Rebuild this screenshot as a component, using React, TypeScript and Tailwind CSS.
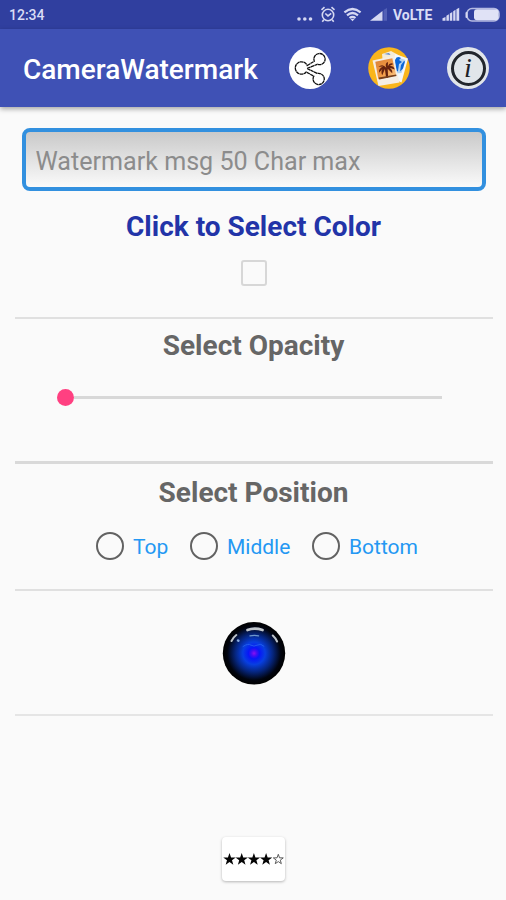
import React from "react";

function StatusIcons() {
  return (
    <svg className="h-[29px] w-[213px]" viewBox="293 0 213 29" fill="none">
      <g fill="#d5d8f2">
        <circle cx="299" cy="19" r="1.8" />
        <circle cx="304.8" cy="19" r="1.8" />
        <circle cx="310.5" cy="19" r="1.8" />
      </g>
      <g stroke="#d5d8f2" strokeWidth="1.6">
        <circle cx="328" cy="15" r="5.7" />
        <path d="M325.3 13.5l2.7 2.4 3.2-2.6M321.5 9.8l3-2.6M331.5 7.2l3 2.6M323.8 19.8l-1.5 2M332.2 19.8l1.5 2" />
      </g>
      <g stroke="#d5d8f2" strokeWidth="2.2">
        <path d="M344.4 12.4q8.1-6.8 16.2 0" />
        <path d="M347 15.3q5.5-4.6 11 0" />
        <path d="M349.5 18q3-2.4 6 0" />
      </g>
      <path d="M350.2 18.8h4.6l-2.3 2.5z" fill="#d5d8f2" />
      <path d="M370 20.8L382.5 11v9.8z" fill="#d5d8f2" />
      <path d="M383.5 20.8V10l3.5-2v12.8z" fill="#5360b6" />
      <path d="M442.5 20.8v-2.5l3-1.3v3.8zM446.4 20.8v-5l2.5-1.6v6.6zM449.8 20.8v-7.4l2.5-1.5v8.9zM453.2 20.8v-9.6l2.3-1.5v11.1zM456.4 20.8V9.3l2.8-1.6v13.1z" fill="#d5d8f2" />
      <rect x="467" y="8.5" width="32" height="12.5" rx="5" stroke="#b5bae2" strokeWidth="1.6" />
      <rect x="474" y="9.3" width="24.5" height="11" rx="3" fill="#e0e2f6" />
      <rect x="465.5" y="12" width="2" height="6" rx="1" fill="#d5d8f2" />
    </svg>
  );
}

function ShareIcon() {
  return (
    <svg className="size-[42px]" viewBox="0 0 42 42">
      <circle cx="21" cy="21" r="21" fill="#fff" />
      <g fill="none" stroke="#111" strokeWidth="1.3">
        <path d="M18.2 18.6L25.3 14.2A5.6 5.6 0 1 1 28.4 17.3L18 21.5L28.4 26.5A5.6 5.6 0 1 1 24.8 29.2L17.2 25A6.2 6.2 0 1 1 18.2 18.6Z" strokeDasharray="3.5 .35" />
      </g>
    </svg>
  );
}

function GalleryIcon() {
  return (
    <svg className="size-[42px]" viewBox="0 0 42 42">
      <defs>
        <linearGradient id="sunset" x1="0" y1="0" x2="1" y2="1">
          <stop offset="0" stopColor="#d98038" />
          <stop offset=".55" stopColor="#f29a45" />
          <stop offset="1" stopColor="#ffd39a" />
        </linearGradient>
      </defs>
      <circle cx="21" cy="21" r="20.8" fill="#f9b51c" />
      <path d="M14 7l9-3 11 6-6 22-12-5z" fill="#f4ecd8" />
      <path d="M16 7l5-1 1.5 2z" fill="#5b86cf" />
      <path d="M27 7l13 4.5-6.5 24-10-5z" fill="#f4f7fa" />
      <path d="M28.5 10l9 3-4 13-6 .5z" fill="#b4d4f3" />
      <path d="M27 13q2-5 6-2l-2 2 3 2-3 2-1 7-2 1zM33 18l3-4 1 .4-2 7-3 3z" fill="#0b67da" />
      <path d="M4.5 13.5L25.5 9l6 26.5L10.5 39z" fill="#f6eee4" />
      <path d="M7.3 14.8l17-3.5 4 17.3-18 3.6z" fill="url(#sunset)" />
      <g fill="#64220f">
        <path d="M18.3 20.8q-3.5-4.5-8-1l5-.2q-5 1.7-4.2 6.2l3.4-4q-2 3-.3 6.5l2.7-6.4 1.2 8.8h2l-.4-9 4.5 4.5q.6-3-2.5-5.4l5 1.6q-1-4-5.3-3.4l4-2q-3.7-2-5.6 2.3l.2-4.4q-3.5 1-1.7 5.9z" />
      </g>
      <path d="M10.8 30.6l17.3-3.2.4 1.7-17.3 3.5z" fill="#78401c" />
    </svg>
  );
}

function InfoIcon() {
  return (
    <span className="grid size-[42px] place-items-center rounded-full bg-[#e2e6ea]">
      <span className="grid size-[35px] place-items-center rounded-full border-[3px] border-[#22262c] bg-[#e1e6ea]">
        <span className="font-['Liberation_Serif',serif] text-[28px] leading-[28px] text-[#1c2026] italic">i</span>
      </span>
    </span>
  );
}

function Lens() {
  return (
    <svg className="size-[64px]" viewBox="0 0 64 64">
      <defs>
        <radialGradient id="lens" cx=".5" cy=".5" r=".5">
          <stop offset="0" stopColor="#8a12f0" />
          <stop offset=".09" stopColor="#430df4" />
          <stop offset=".18" stopColor="#0717f8" />
          <stop offset=".36" stopColor="#083fe0" />
          <stop offset=".6" stopColor="#06267f" />
          <stop offset=".86" stopColor="#01040e" />
          <stop offset="1" stopColor="#000" />
        </radialGradient>
        <filter id="soft"><feGaussianBlur stdDeviation=".5" /></filter>
      </defs>
      <circle cx="32" cy="32.3" r="31.2" fill="url(#lens)" />
      <g fill="none" strokeLinecap="round" filter="url(#soft)">
        <path d="M25.5 9q7-2.8 15 0" stroke="#c2c7cc" strokeWidth="2.7" />
        <path d="M28 14.8q4.5-1 8.5 0" stroke="#6e98cc" strokeWidth="1.3" />
        <path d="M9.5 20q2-4 4.8-6M50.8 14.5q3 2.8 4.3 6" stroke="#bcc3ca" strokeWidth="2" />
        <path d="M16 19.5l.4.2" stroke="#87a9df" strokeWidth="2.5" />
        <path d="M21 25.5q5-3.5 8-1.3 3 1.8 6 0 4-2.3 7 1" stroke="#2864ef" strokeWidth=".8" />
      </g>
    </svg>
  );
}

function Stars() {
  const star = "M0-6.5L1.55-2.1 6.2-2 2.5.8 3.8 5.2 0 2.6-3.8 5.2-2.5.8-6.2-2-1.55-2.1Z";
  return (
    <svg className="h-[16px] w-[62px]" viewBox="0 0 62 16">
      {[6.5, 18.7, 30.9, 43.1].map((x) => (
        <path key={x} d={star} transform={`translate(${x} 8.5)`} fill="#050505" />
      ))}
      <path d={star} transform="translate(55.3 8.5) scale(.8)" fill="#fff" stroke="#555" strokeWidth="1.2" />
    </svg>
  );
}

function Position({ label }: { label: string }) {
  return (
    <label className="flex shrink-0 items-center">
      <input type="radio" name="position" className="size-[28px] shrink-0 appearance-none rounded-full border-[2.4px] border-[#626262]" />
      <span className="mt-[2px] ml-[9px] text-[21px] leading-[28px] text-[#2498f3]">{label}</span>
    </label>
  );
}

export default function App() {
  return (
    <div className="flex h-[900px] w-[506px] flex-col overflow-hidden bg-[#fafafa] font-['Roboto',sans-serif]">
      <div className="flex h-[29px] shrink-0 items-center justify-between bg-[#303f9f] pl-[9px]">
        <span className="pt-px text-[14px] leading-[29px] font-medium text-[#d9dcf5]">12:34</span>
        <div className="grid">
          <div className="col-start-1 row-start-1"><StatusIcons /></div>
          <span className="col-start-1 row-start-1 pl-[100px] text-[14px] leading-[30px] font-bold text-[#d9dcf5]">VoLTE</span>
        </div>
      </div>
      <header className="flex h-[78px] shrink-0 items-center bg-[#3f51b5] pl-[23px] shadow-[0_2px_5px_rgba(0,0,0,0.35)]">
        <h1 className="w-[266px] pt-[3px] text-[28px] leading-[36px] font-medium whitespace-nowrap text-white">CameraWatermark</h1>
        <div className="flex gap-[37px]">
          <ShareIcon />
          <GalleryIcon />
          <InfoIcon />
        </div>
      </header>
      <main className="flex flex-col items-center pl-px">
        <input
          className="mt-[21px] h-[63px] w-[464px] rounded-[8px] border-4 border-[#3290df] bg-linear-to-b from-[#c6c6c6] to-[#fefefe] bg-origin-border px-[10px] pt-[3px] text-[25.1px] placeholder:text-[#8c8c8c]"
          placeholder="Watermark msg 50 Char max"
        />
        <h2 className="mt-[18px] text-[28px] leading-[36px] font-bold text-[#2234a8]">Click to Select Color</h2>
        <input type="checkbox" className="mt-[15px] size-[26px] appearance-none rounded-[3px] border-2 border-[#d7d7d7]" />
        <hr className="mt-[31px] h-[2px] w-[478px] border-0 bg-[#e0e0e0]" />
        <h2 className="mt-[9px] text-[28px] leading-[36px] font-bold text-[#666]">Select Opacity</h2>
        <div className="mt-[24px] mr-[8px] flex h-[18px] w-[385px] items-center">
          <span className="size-[17px] rounded-full bg-[#ff4081]" />
          <span className="h-[3px] flex-1 bg-[#d8d8d8]" />
        </div>
        <hr className="mt-[55px] h-[3px] w-[478px] border-0 bg-[#d9d9d9]" />
        <h2 className="mt-[11px] text-[28px] leading-[36px] font-bold text-[#666]">Select Position</h2>
        <div className="mt-[21px] ml-[7px] flex h-[28px] w-[322px] justify-between">
          <Position label="Top" />
          <Position label="Middle" />
          <Position label="Bottom" />
        </div>
        <hr className="mt-[29px] h-[2px] w-[478px] border-0 bg-[#e0e0e0]" />
        <button className="mt-[30px] flex"><Lens /></button>
        <hr className="mt-[29px] h-[2px] w-[478px] border-0 bg-[#e5e5e5]" />
        <button className="mt-[121px] flex h-[44px] w-[63px] items-center justify-center rounded-[4px] bg-white shadow-[0_1px_3px_rgba(0,0,0,0.28)]">
          <Stars />
        </button>
      </main>
    </div>
  );
}
